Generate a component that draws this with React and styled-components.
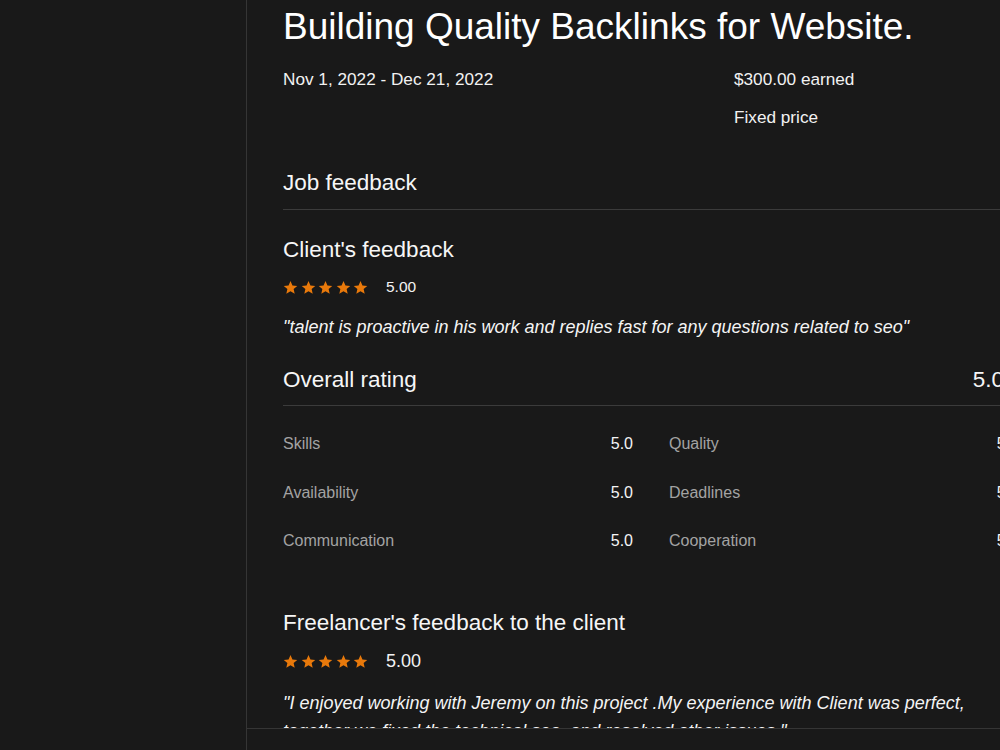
import React from 'react';
import styled, { createGlobalStyle } from 'styled-components';

const GlobalStyle = createGlobalStyle`
  html, body {
    margin: 0;
    padding: 0;
    background: #191919;
    overflow: hidden;
  }
  body {
    font-family: "Liberation Sans", Arial, sans-serif;
    color: #f4f4f4;
  }
`;

const ratings = [
  { label: 'Skills', value: '5.0' },
  { label: 'Quality', value: '5.0' },
  { label: 'Availability', value: '5.0' },
  { label: 'Deadlines', value: '5.0' },
  { label: 'Communication', value: '5.0' },
  { label: 'Cooperation', value: '5.0' },
];

const Star = () => (
  <svg width="15" height="15" viewBox="0 0 24 24">
    <path
      fill="#e8790b"
      d="M12 1.6l3.1 7.1 7.7.7-5.8 5.1 1.7 7.6L12 18.1l-6.7 4 1.7-7.6-5.8-5.1 7.7-.7z"
    />
  </svg>
);

const Stars = ({ score, big, top }) => (
  <StarRow $top={top}>
    <StarGroup>
      {[0, 1, 2, 3, 4].map((i) => <Star key={i} />)}
    </StarGroup>
    <Score $big={big}>{score}</Score>
  </StarRow>
);

const App = () => {
  return (
    <>
      <GlobalStyle />
      <Page>
        <Backdrop />
        <Panel>
          <Scroll>
            <Content>
              <Title>Building Quality Backlinks for Website.</Title>
              <Meta>
                <MetaText>Nov 1, 2022 - Dec 21, 2022</MetaText>
                <div>
                  <MetaText>$300.00 earned</MetaText>
                  <MetaText>Fixed price</MetaText>
                </div>
              </Meta>

              <SectionHead $divider $top={32} $pad={11}>Job feedback</SectionHead>

              <SubHead $top={25}>Client's feedback</SubHead>
              <Stars score="5.00" top={12} />
              <Quote $top={16}>
                "talent is proactive in his work and replies fast for any questions related to seo"
              </Quote>

              <SectionHead $divider $top={24} $pad={10}>
                <span>Overall rating</span>
                <OverallValue>5.0</OverallValue>
              </SectionHead>

              <RatingGrid>
                {ratings.map((r) => (
                  <RatingRow key={r.label}>
                    <RatingLabel>{r.label}</RatingLabel>
                    <RatingValue>{r.value}</RatingValue>
                  </RatingRow>
                ))}
              </RatingGrid>

              <SubHead $top={55}>Freelancer's feedback to the client</SubHead>
              <Stars score="5.00" big top={13} />
              <Quote $top={18}>
                "I enjoyed working with Jeremy on this project .My experience with Client was perfect,
                together we fixed the technical seo, and resolved other issues."
              </Quote>
            </Content>
          </Scroll>
          <Footer />
        </Panel>
      </Page>
    </>
  );
};

const Page = styled.div`
  display: flex;
  height: 750px;
  width: 100%;
  overflow: hidden;
`;

const Backdrop = styled.div`
  flex: 0 0 246px;
`;

const Panel = styled.div`
  flex: 0 0 820px;
  display: flex;
  flex-direction: column;
  border-left: 1px solid #353535;
  height: 750px;
`;

const Scroll = styled.div`
  height: 728px;
  overflow: hidden;
`;

const Content = styled.div`
  width: 736px;
  padding: 5px 0 0 36px;
`;

const Title = styled.h1`
  margin: 0;
  font-size: 37px;
  line-height: 44px;
  font-weight: 400;
  color: #ffffff;
`;

const Meta = styled.div`
  display: grid;
  grid-template-columns: 451px 1fr;
  margin-top: 11px;
`;

const MetaText = styled.div`
  font-size: 17.2px;
  line-height: 38px;
  color: #f2f2f2;
`;

const SectionHead = styled.div`
  display: flex;
  justify-content: space-between;
  align-items: center;
  margin-top: ${(p) => p.$top}px;
  padding-bottom: ${(p) => p.$pad}px;
  font-size: 22.5px;
  line-height: 30px;
  color: #f6f6f6;
  border-bottom: ${(p) => (p.$divider ? '1px solid #3b3b3b' : 'none')};
`;

const OverallValue = styled.span`
  margin-right: 15px;
`;

const SubHead = styled.div`
  margin-top: ${(p) => p.$top}px;
  font-size: 22.5px;
  line-height: 30px;
  color: #f6f6f6;
`;

const StarRow = styled.div`
  display: flex;
  align-items: center;
  height: 20px;
  margin-top: ${(p) => p.$top}px;
`;

const StarGroup = styled.div`
  display: flex;
  gap: 2.5px;
  width: 103px;

  svg {
    display: block;
  }
`;

const Score = styled.span`
  font-size: ${(p) => (p.$big ? '18px' : '15.5px')};
  line-height: 20px;
  color: #f2f2f2;
`;

const Quote = styled.p`
  margin: ${(p) => p.$top}px 0 0;
  font-size: 18px;
  line-height: 28px;
  font-style: italic;
  color: #f4f4f4;
`;

const RatingGrid = styled.div`
  display: grid;
  grid-template-columns: 350px 350px;
  column-gap: 36px;
  row-gap: 24.5px;
  margin-top: 26px;
`;

const RatingRow = styled.div`
  display: flex;
  justify-content: space-between;
  align-items: center;
  line-height: 24px;
`;

const RatingLabel = styled.span`
  font-size: 16px;
  color: #a3a3a3;
`;

const RatingValue = styled.span`
  font-size: 16px;
  color: #f4f4f4;
`;

const Footer = styled.div`
  flex: 1;
  border-top: 1px solid #353535;
`;

export default App;
